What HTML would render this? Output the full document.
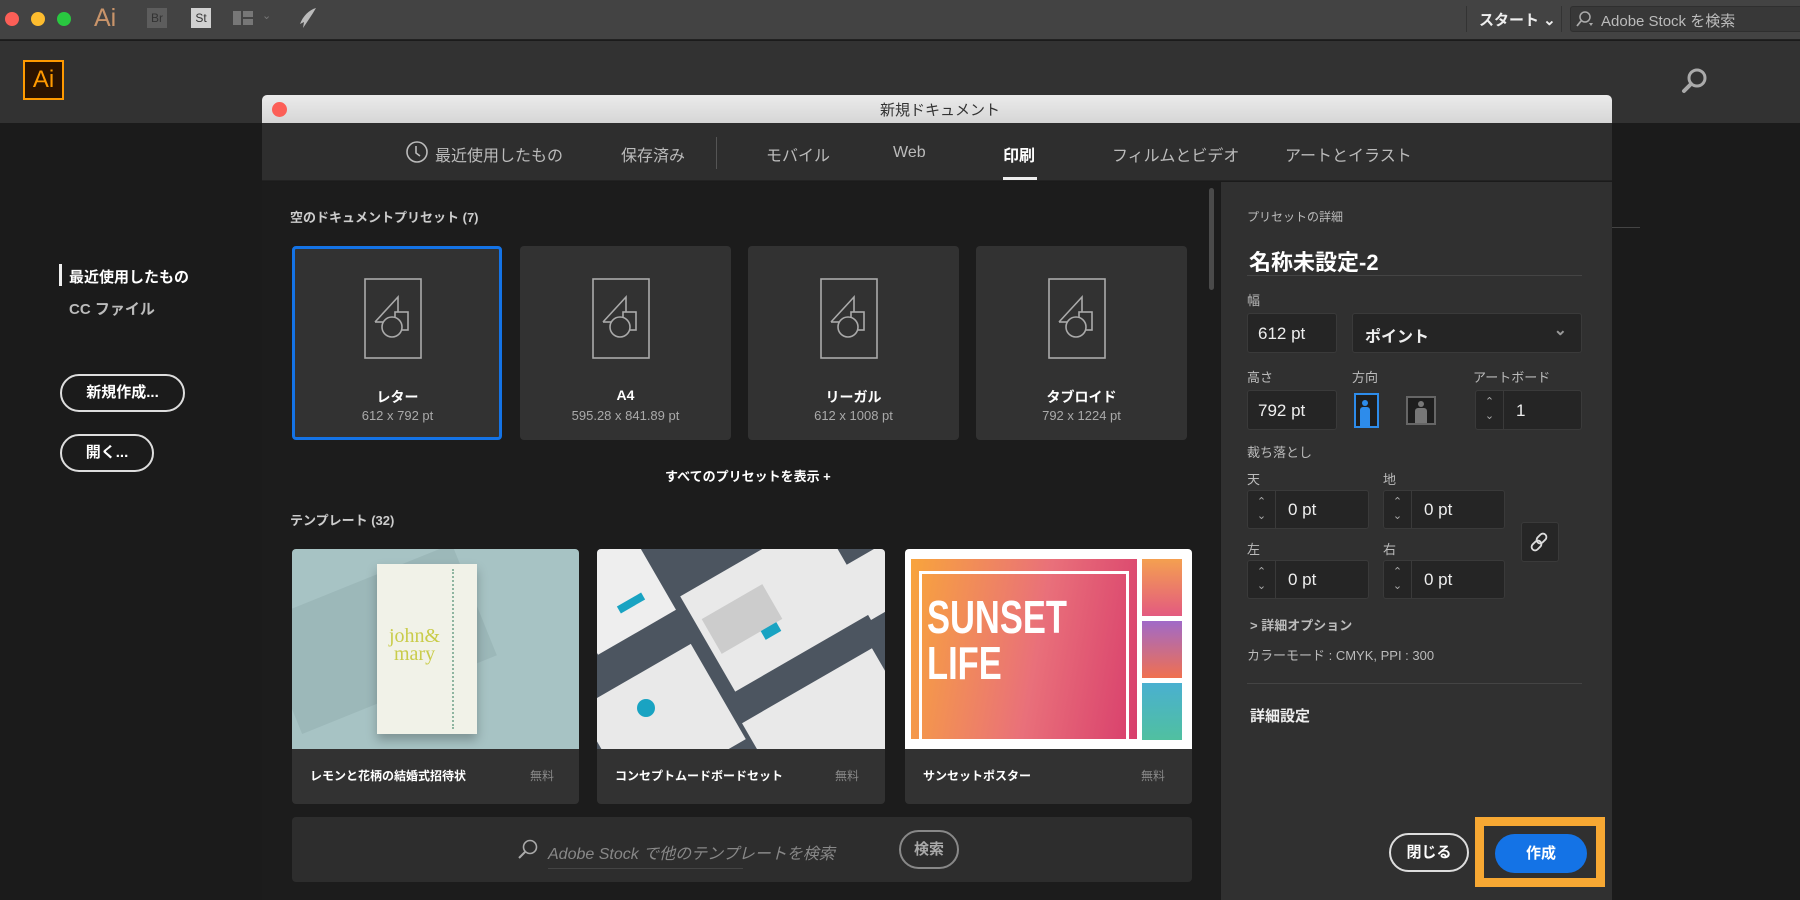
<!DOCTYPE html>
<html><head><meta charset="utf-8"><style>
*{margin:0;padding:0;box-sizing:border-box}
body{width:1800px;height:900px;overflow:hidden;background:#1b1b1b;font-family:"Liberation Sans","Noto Sans CJK JP",sans-serif;color:#ddd;position:relative}
.a{position:absolute}
.t{position:absolute;white-space:nowrap}
.card{position:absolute;background:#323232;border-radius:4px}
.img{position:absolute;left:0;top:0;width:100%;height:200px;overflow:hidden}
.inp{position:absolute;background:#252525;border:1px solid #3a3a3a;border-radius:3px;color:#eee;font-size:17px}
.lbl{position:absolute;font-size:13px;color:#bbb;white-space:nowrap}
.spin{position:absolute;left:0;top:0;bottom:0;width:28px;border-right:1px solid #3a3a3a;color:#aaa;font-size:11px;text-align:center;line-height:14px;padding-top:4px}
</style></head><body>
<div class="a" style="left:0;top:0;width:1800px;height:40px;background:#434343;border-bottom:1px solid #222"></div>
<div class="a" style="left:5px;top:12px;width:14px;height:14px;border-radius:50%;background:#fc5f57"></div>
<div class="a" style="left:31px;top:12px;width:14px;height:14px;border-radius:50%;background:#fdbc2e"></div>
<div class="a" style="left:57px;top:12px;width:14px;height:14px;border-radius:50%;background:#29c840"></div>
<div class="t" style="left:94px;top:4px;font-size:25px;color:#c9946a">Ai</div>
<div class="a" style="left:147px;top:8px;width:20px;height:20px;background:#5d5d5d;color:#333;font-size:12px;text-align:center;line-height:20px">Br</div>
<div class="a" style="left:191px;top:8px;width:20px;height:20px;background:#d0d0d0;color:#333;font-size:12px;text-align:center;line-height:20px">St</div>
<div class="a" style="left:233px;top:11px;width:8px;height:14px;background:#777"></div>
<div class="a" style="left:243px;top:11px;width:10px;height:6px;background:#777"></div>
<div class="a" style="left:243px;top:19px;width:10px;height:6px;background:#777"></div>
<div class="t" style="left:262px;top:9px;font-size:11px;color:#777">⌄</div>
<svg class="a" style="left:295px;top:6px" width="24" height="24"><path d="M21 2 C14 4 8 10 5 18 L9 16 L8 22 C12 16 17 9 21 2Z" fill="#bbb"/></svg>
<div class="a" style="left:1466px;top:6px;width:1px;height:26px;background:#333"></div>
<div class="t" style="left:1479px;top:9px;font-size:15px;font-weight:bold;color:#eee">スタート ⌄</div>
<div class="a" style="left:1561px;top:6px;width:1px;height:26px;background:#333"></div>
<div class="a" style="left:1570px;top:6px;width:240px;height:26px;background:#383838;border:1px solid #2f2f2f;border-radius:3px"></div>
<svg class="a" style="left:1575px;top:10px" width="20" height="18"><circle cx="10" cy="7" r="5" stroke="#aaa" stroke-width="1.5" fill="none"/><path d="M6 11 L2 16" stroke="#aaa" stroke-width="1.8"/><path d="M14 13 L18 13 L16 16Z" fill="#aaa"/></svg>
<div class="t" style="left:1601px;top:10px;font-size:15px;color:#bbb">Adobe Stock を検索</div>
<div class="a" style="left:0;top:41px;width:1800px;height:82px;background:#323232"></div>
<div class="a" style="left:23px;top:60px;width:41px;height:40px;background:#2b1300;border:2px solid #ff9a00;color:#ff9a00;font-size:24px;text-align:center;line-height:35px">Ai</div>
<svg class="a" style="left:1680px;top:66px" width="30" height="30"><circle cx="17" cy="12" r="8" stroke="#aaa" stroke-width="3" fill="none"/><path d="M11 18 L4 25" stroke="#aaa" stroke-width="4" stroke-linecap="round"/></svg>
<div class="a" style="left:59px;top:264px;width:3px;height:22px;background:#eee"></div>
<div class="t" style="left:69px;top:266px;font-size:15px;font-weight:bold;color:#fff">最近使用したもの</div>
<div class="t" style="left:69px;top:298px;font-size:15px;font-weight:bold;color:#bbb">CC ファイル</div>
<div class="a" style="left:60px;top:374px;width:125px;height:38px;border:2px solid #ddd;border-radius:19px;color:#fff;font-size:15px;font-weight:bold;text-align:center;line-height:34px">新規作成...</div>
<div class="a" style="left:60px;top:434px;width:94px;height:38px;border:2px solid #ddd;border-radius:19px;color:#fff;font-size:15px;font-weight:bold;text-align:center;line-height:34px">開く...</div>
<div class="a" style="left:1612px;top:227px;width:28px;height:1px;background:#444"></div>
<div class="a" style="left:262px;top:95px;width:1350px;height:28px;background:linear-gradient(#ebebeb,#d6d6d6);border-radius:5px 5px 0 0"></div>
<div class="a" style="left:272px;top:102px;width:15px;height:15px;border-radius:50%;background:#fc5f57"></div>
<div class="t" style="left:880px;top:99px;font-size:15px;color:#333">新規ドキュメント</div>
<div class="a" style="left:262px;top:123px;width:1350px;height:58px;background:#2e2e2e;border-bottom:1px solid #222"></div>
<svg class="a" style="left:405px;top:140px" width="24" height="24"><circle cx="12" cy="12" r="10" stroke="#bbb" stroke-width="1.6" fill="none"/><path d="M11 6 V13 L15 16" stroke="#bbb" stroke-width="1.6" fill="none"/></svg>
<div class="t" style="left:435px;top:142px;font-size:16px;color:#bbb">最近使用したもの</div>
<div class="t" style="left:621px;top:142px;font-size:16px;color:#bbb">保存済み</div>
<div class="a" style="left:716px;top:137px;width:1px;height:32px;background:#555"></div>
<div class="t" style="left:766px;top:142px;font-size:16px;color:#bbb">モバイル</div>
<div class="t" style="left:893px;top:144px;font-size:16px;color:#bbb">Web</div>
<div class="t" style="left:1003px;top:142px;font-size:16px;font-weight:bold;color:#fff">印刷</div>
<div class="a" style="left:1003px;top:177px;width:34px;height:3px;background:#eee"></div>
<div class="t" style="left:1112px;top:142px;font-size:16px;color:#bbb">フィルムとビデオ</div>
<div class="t" style="left:1285px;top:142px;font-size:16px;color:#bbb">アートとイラスト</div>
<div class="a" style="left:262px;top:182px;width:958px;height:718px;background:#1c1c1c"></div>
<div class="a" style="left:1209px;top:188px;width:5px;height:102px;background:#4a4a4a;border-radius:3px"></div>
<div class="t" style="left:290px;top:207px;font-size:13px;font-weight:bold;color:#ccc">空のドキュメントプリセット (7)</div>
<div class="card" style="left:292px;top:246px;width:210px;height:194px;border:3px solid #1473e6"></div>
<div class="card" style="left:520px;top:246px;width:211px;height:194px"></div>
<div class="card" style="left:748px;top:246px;width:211px;height:194px"></div>
<div class="card" style="left:976px;top:246px;width:211px;height:194px"></div>
<svg class="a" style="left:0;top:0" width="1220" height="460">
<defs><g id="ic" stroke="#aaa" stroke-width="1.6" fill="none"><rect x="0" y="0" width="56" height="79"/><path d="M10 43 L33 18 L33 33"/><path d="M10 43 L20 43"/><rect x="30" y="33" width="13" height="18"/><circle cx="27" cy="48" r="10" fill="#323232"/></g></defs>
<use href="#ic" x="365" y="279"/><use href="#ic" x="593" y="279"/><use href="#ic" x="821" y="279"/><use href="#ic" x="1049" y="279"/>
</svg>
<div class="t" style="left:292px;top:387px;width:211px;text-align:center;font-size:14px;font-weight:bold;color:#fff">レター</div>
<div class="t" style="left:292px;top:408px;width:211px;text-align:center;font-size:13px;color:#aaa">612 x 792 pt</div>
<div class="t" style="left:520px;top:387px;width:211px;text-align:center;font-size:14px;font-weight:bold;color:#fff">A4</div>
<div class="t" style="left:520px;top:408px;width:211px;text-align:center;font-size:13px;color:#aaa">595.28 x 841.89 pt</div>
<div class="t" style="left:748px;top:387px;width:211px;text-align:center;font-size:14px;font-weight:bold;color:#fff">リーガル</div>
<div class="t" style="left:748px;top:408px;width:211px;text-align:center;font-size:13px;color:#aaa">612 x 1008 pt</div>
<div class="t" style="left:976px;top:387px;width:211px;text-align:center;font-size:14px;font-weight:bold;color:#fff">タブロイド</div>
<div class="t" style="left:976px;top:408px;width:211px;text-align:center;font-size:13px;color:#aaa">792 x 1224 pt</div>
<div class="t" style="left:665px;top:466px;font-size:13px;font-weight:bold;color:#fff">すべてのプリセットを表示 +</div>
<div class="t" style="left:290px;top:510px;font-size:13px;font-weight:bold;color:#ccc">テンプレート (32)</div>
<div class="card" style="left:292px;top:549px;width:287px;height:255px;overflow:hidden">
 <div class="img" style="background:#a7c3c4">
 <div class="a" style="left:-20px;top:30px;width:210px;height:120px;background:#9cb8b9;transform:rotate(-22deg)"></div>
 <div class="a" style="left:85px;top:15px;width:100px;height:170px;background:#f1f2e8;box-shadow:0 6px 10px rgba(0,0,0,.25)"></div>
 <div class="a" style="left:160px;top:20px;width:20px;height:160px;border-left:2px dotted #8fb5a0"></div>
 <div class="t" style="left:97px;top:78px;font-family:'Liberation Serif',serif;font-size:20px;color:#c9cc4a;line-height:18px">john&amp;<br>&nbsp;mary</div>
 </div>
 <div class="t" style="left:18px;top:218px;font-size:12px;font-weight:bold;color:#fff">レモンと花柄の結婚式招待状</div>
 <div class="t" style="left:238px;top:218px;font-size:12px;color:#888">無料</div>
</div>
<div class="card" style="left:597px;top:549px;width:288px;height:255px;overflow:hidden">
 <div class="img" style="background:#4c5560">
 <div class="a" style="left:-30px;top:-10px;width:90px;height:100px;background:#eee;transform:rotate(-30deg)"></div>
 <div class="a" style="left:100px;top:0px;width:160px;height:110px;background:#e9e9e9;transform:rotate(-30deg)"></div>
 <div class="a" style="left:0px;top:120px;width:130px;height:110px;background:#e9e9e9;transform:rotate(-30deg)"></div>
 <div class="a" style="left:160px;top:130px;width:150px;height:100px;background:#e9e9e9;transform:rotate(-30deg)"></div>
 <div class="a" style="left:255px;top:0px;width:60px;height:60px;background:#e9e9e9;transform:rotate(-30deg)"></div>
 <div class="a" style="left:110px;top:50px;width:70px;height:40px;background:#ccc;transform:rotate(-30deg)"></div>
 <div class="a" style="left:40px;top:150px;width:18px;height:18px;border-radius:50%;background:#19a3c2"></div>
 <div class="a" style="left:165px;top:77px;width:18px;height:10px;background:#19a3c2;transform:rotate(-30deg)"></div>
 <div class="a" style="left:20px;top:50px;width:28px;height:8px;background:#19a3c2;transform:rotate(-30deg)"></div>
 </div>
 <div class="t" style="left:18px;top:218px;font-size:12px;font-weight:bold;color:#fff">コンセプトムードボードセット</div>
 <div class="t" style="left:238px;top:218px;font-size:12px;color:#888">無料</div>
</div>
<div class="card" style="left:905px;top:549px;width:287px;height:255px;overflow:hidden">
 <div class="img" style="background:#fff">
 <div class="a" style="left:6px;top:10px;width:226px;height:180px;background:linear-gradient(100deg,#f8a43c,#e9707a 55%,#d83e6c)"></div>
 <div class="a" style="left:14px;top:22px;width:210px;height:170px;border:3px solid #fff;border-bottom:none"></div>
 <div class="t" style="left:22px;top:45px;font-size:46px;font-weight:bold;color:#fff;line-height:46px;transform:scaleX(.75);transform-origin:left">SUNSET<br>LIFE</div>
 <div class="a" style="left:237px;top:10px;width:40px;height:57px;background:linear-gradient(#f4a050,#e35a80)"></div>
 <div class="a" style="left:237px;top:72px;width:40px;height:57px;background:linear-gradient(#a06ac8,#f07050)"></div>
 <div class="a" style="left:237px;top:134px;width:40px;height:57px;background:linear-gradient(#4ab0d0,#50c0a0)"></div>
 </div>
 <div class="t" style="left:18px;top:218px;font-size:12px;font-weight:bold;color:#fff">サンセットポスター</div>
 <div class="t" style="left:236px;top:218px;font-size:12px;color:#888">無料</div>
</div>
<div class="card" style="left:292px;top:817px;width:900px;height:65px;background:#2d2d2d"></div>
<svg class="a" style="left:517px;top:838px" width="22" height="22"><circle cx="13" cy="9" r="6.5" stroke="#aaa" stroke-width="1.6" fill="none"/><path d="M8 14 L2 20" stroke="#aaa" stroke-width="2"/></svg>
<div class="t" style="left:548px;top:840px;font-size:16px;font-style:italic;color:#888">Adobe Stock で他のテンプレートを検索</div>
<div class="a" style="left:548px;top:868px;width:195px;height:1px;background:#444"></div>
<div class="a" style="left:899px;top:830px;width:60px;height:39px;border:2px solid #888;border-radius:20px;color:#aaa;font-size:15px;font-weight:bold;text-align:center;line-height:35px">検索</div>
<div class="a" style="left:1221px;top:182px;width:391px;height:718px;background:#303030"></div>
<div class="lbl" style="left:1247px;top:208px;font-size:12px">プリセットの詳細</div>
<div class="t" style="left:1249px;top:245px;font-size:22px;font-weight:bold;color:#fff">名称未設定-2</div>
<div class="a" style="left:1247px;top:275px;width:335px;height:1px;background:#444"></div>
<div class="lbl" style="left:1247px;top:290px">幅</div>
<div class="inp" style="left:1247px;top:313px;width:90px;height:40px;padding:10px 0 0 10px">612 pt</div>
<div class="inp" style="left:1352px;top:313px;width:230px;height:40px;padding:9px 0 0 12px;font-weight:bold;font-size:16px">ポイント<span style="position:absolute;right:14px;top:6px;color:#999">⌄</span></div>
<div class="lbl" style="left:1247px;top:367px">高さ</div>
<div class="lbl" style="left:1352px;top:367px">方向</div>
<div class="lbl" style="left:1473px;top:367px">アートボード</div>
<div class="inp" style="left:1247px;top:390px;width:90px;height:40px;padding:10px 0 0 10px">792 pt</div>
<div class="a" style="left:1354px;top:393px;width:25px;height:35px;background:#1e1e1e;border:2px solid #2d8ceb"></div>
<div class="a" style="left:1362px;top:400px;width:6px;height:6px;border-radius:50%;background:#2d8ceb"></div>
<div class="a" style="left:1360px;top:407px;width:10px;height:19px;background:#2d8ceb;border-radius:3px 3px 0 0"></div>
<div class="a" style="left:1406px;top:396px;width:30px;height:29px;background:#1e1e1e;border:2px solid #666"></div>
<div class="a" style="left:1418px;top:401px;width:6px;height:6px;border-radius:50%;background:#777"></div>
<div class="a" style="left:1415px;top:408px;width:12px;height:15px;background:#777;border-radius:3px 3px 0 0"></div>
<div class="inp" style="left:1475px;top:390px;width:107px;height:40px;padding:10px 0 0 40px"><div class="spin">⌃<br>⌄</div>1</div>
<div class="lbl" style="left:1247px;top:442px">裁ち落とし</div>
<div class="lbl" style="left:1247px;top:469px">天</div>
<div class="lbl" style="left:1383px;top:469px">地</div>
<div class="inp" style="left:1247px;top:490px;width:122px;height:39px;padding:9px 0 0 40px"><div class="spin">⌃<br>⌄</div>0 pt</div>
<div class="inp" style="left:1383px;top:490px;width:122px;height:39px;padding:9px 0 0 40px"><div class="spin">⌃<br>⌄</div>0 pt</div>
<div class="lbl" style="left:1247px;top:539px">左</div>
<div class="lbl" style="left:1383px;top:539px">右</div>
<div class="inp" style="left:1247px;top:560px;width:122px;height:39px;padding:9px 0 0 40px"><div class="spin">⌃<br>⌄</div>0 pt</div>
<div class="inp" style="left:1383px;top:560px;width:122px;height:39px;padding:9px 0 0 40px"><div class="spin">⌃<br>⌄</div>0 pt</div>
<div class="a" style="left:1521px;top:522px;width:38px;height:40px;background:#262626;border:1px solid #3a3a3a;border-radius:3px"></div>
<svg class="a" style="left:1529px;top:531px" width="22" height="22"><g stroke="#ddd" stroke-width="1.8" fill="none"><rect x="9" y="2" width="7" height="11" rx="3.5" transform="rotate(45 12.5 7.5)"/><rect x="4" y="9" width="7" height="11" rx="3.5" transform="rotate(45 7.5 14.5)"/></g></svg>
<div class="t" style="left:1250px;top:615px;font-size:13px;font-weight:bold;color:#bbb">&gt; 詳細オプション</div>
<div class="t" style="left:1247px;top:645px;font-size:13px;color:#bbb">カラーモード : CMYK, PPI : 300</div>
<div class="a" style="left:1247px;top:683px;width:335px;height:1px;background:#444"></div>
<div class="t" style="left:1250px;top:705px;font-size:15px;font-weight:bold;color:#eee">詳細設定</div>
<div class="a" style="left:1389px;top:833px;width:80px;height:39px;border:2px solid #ddd;border-radius:20px;color:#fff;font-size:15px;font-weight:bold;text-align:center;line-height:35px">閉じる</div>
<div class="a" style="left:1475px;top:817px;width:130px;height:70px;border:9px solid #f7a833"></div>
<div class="a" style="left:1495px;top:834px;width:92px;height:39px;background:#1473e6;border-radius:20px;color:#fff;font-size:15px;font-weight:bold;text-align:center;line-height:39px">作成</div>
</body></html>
